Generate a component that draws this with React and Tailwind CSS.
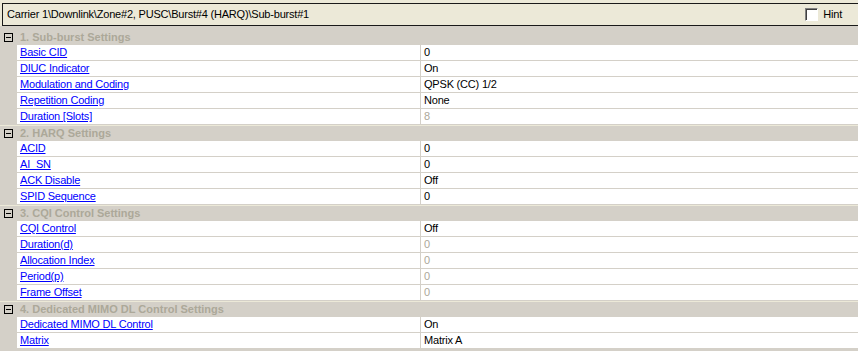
import React from 'react';

const sections = [
  {
    title: '1. Sub-burst Settings',
    rows: [
      { label: 'Basic CID', value: '0' },
      { label: 'DIUC Indicator', value: 'On' },
      { label: 'Modulation and Coding', value: 'QPSK (CC) 1/2' },
      { label: 'Repetition Coding', value: 'None' },
      { label: 'Duration [Slots]', value: '8', disabled: true },
    ],
  },
  {
    title: '2. HARQ Settings',
    rows: [
      { label: 'ACID', value: '0' },
      { label: 'AI_SN', value: '0' },
      { label: 'ACK Disable', value: 'Off' },
      { label: 'SPID Sequence', value: '0' },
    ],
  },
  {
    title: '3. CQI Control Settings',
    rows: [
      { label: 'CQI Control', value: 'Off' },
      { label: 'Duration(d)', value: '0', disabled: true },
      { label: 'Allocation Index', value: '0', disabled: true },
      { label: 'Period(p)', value: '0', disabled: true },
      { label: 'Frame Offset', value: '0', disabled: true },
    ],
  },
  {
    title: '4. Dedicated MIMO DL Control Settings',
    rows: [
      { label: 'Dedicated MIMO DL Control', value: 'On' },
      { label: 'Matrix', value: 'Matrix A' },
    ],
  },
];

const SectionHeader = ({ title, first }) => (
  <div className={`flex h-[16px] items-center bg-[#d4d0c8] ${first ? '' : 'shadow-[inset_0_1px_0_#ece9d8]'}`}>
    <div className="flex w-[17px] shrink-0 justify-center">
      <div className="relative h-[9px] w-[9px] border border-black bg-[#d4d0c8]">
        <div className="absolute left-[1px] top-[3px] h-px w-[5px] bg-black" />
      </div>
    </div>
    <span className="pl-[3px] font-bold tracking-normal text-[#aca899]">{title}</span>
  </div>
);

const PropRow = ({ label, value, disabled }) => (
  <div className="flex h-[16px]">
    <div className="w-[17px] shrink-0 bg-[#d4d0c8]" />
    <div className="flex flex-1 border-b border-[#d4d0c8] bg-white">
      <div className="flex w-[404px] shrink-0 items-center border-r border-[#d4d0c8] pl-[3px]">
        <a href="#" className="text-[#0000ff] underline">{label}</a>
      </div>
      <div className={`flex flex-1 items-center pl-[3px] ${disabled ? 'text-[#aca899]' : 'text-black'}`}>
        {value}
      </div>
    </div>
  </div>
);

const App = () => {
  return (
    <div className="h-[351px] w-[858px] overflow-hidden bg-[#d4d0c8] text-[11px] leading-none tracking-[-0.2px] text-black" style={{ fontFamily: '"Liberation Sans", Arial, sans-serif' }}>
      {/* Path bar */}
      <div className="h-[26px] bg-[#ece9d8] pt-[3px] pl-[2px]">
        <div className="flex h-[23px] items-center border-y border-l border-[#1a1a1a] pl-[4px] pr-[16px]">
          <span className="flex-1">Carrier 1\Downlink\Zone#2, PUSC\Burst#4 (HARQ)\Sub-burst#1</span>
          <div className="flex items-center gap-[5px]">
            <div className="h-[13px] w-[13px] border border-t-[#808080] border-l-[#808080] border-b-white border-r-white bg-white shadow-[inset_1px_1px_0_#404040]" />
            <span>Hint</span>
          </div>
        </div>
      </div>
      <div className="h-[3px]" />

      {/* Property grid */}
      <div>
        {sections.map((s, i) => (
          <div key={s.title}>
            <SectionHeader title={s.title} first={i === 0} />
            {s.rows.map((r) => (
              <PropRow key={r.label} {...r} />
            ))}
          </div>
        ))}
      </div>
    </div>
  );
};

export default App;
